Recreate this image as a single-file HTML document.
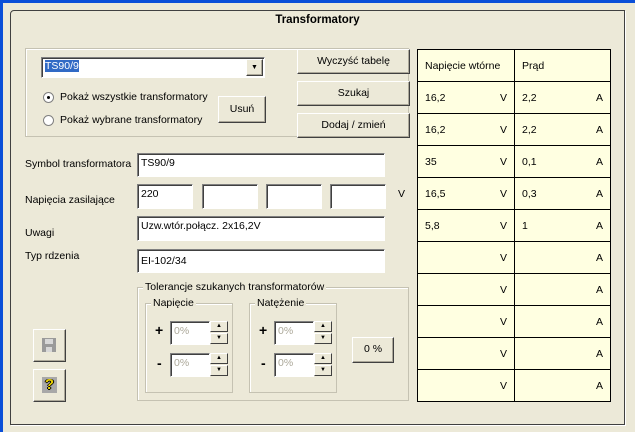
<!DOCTYPE html>
<html><head><meta charset="utf-8"><style>
*{box-sizing:border-box;margin:0;padding:0}
body{width:635px;height:432px;background:#ece9d8;position:relative;overflow:hidden;font-family:"Liberation Sans",sans-serif;font-size:10.5px;color:#000}
.a{position:absolute}
.btn{position:absolute;background:#ece9d8;border:1px solid;border-color:#fff #404040 #404040 #fff;box-shadow:inset -1px -1px 0 #aca899;text-align:center}
.edit{position:absolute;background:#fff;border:1px solid;border-color:#808080 #fff #fff #808080;box-shadow:inset 1px 1px 0 #404040;padding:3px 0 0 3px;white-space:nowrap}
.grp{position:absolute;border:1px solid #c5c2b2;box-shadow:1px 1px 0 #fff inset}
.leg{position:absolute;background:#ece9d8;padding:0 2px;top:-7px;left:5px;white-space:nowrap}
.radio{position:absolute;width:11px;height:11px;border-radius:50%;border:1px solid #808080;background:#fff}
.spin{position:absolute;width:18px;height:11px;background:#ece9d8;border:1px solid;border-color:#fff #404040 #404040 #fff;font-size:6px;text-align:center;line-height:9px}
table{position:absolute;left:417px;top:49px;border-collapse:collapse;background:#ffffe1}
td{border:1px solid #000;height:32px;padding:0 7px;vertical-align:middle}
td span{float:right}
</style></head><body>
<div class="a" style="left:0;top:0;width:635px;height:3px;background:#0a4fd8"></div>
<div class="a" style="left:0;top:0;width:3px;height:432px;background:#0a4fd8"></div>
<div class="a" style="left:10px;top:10px;width:615px;height:415px;border:1px solid #404040;border-top-left-radius:4px;box-shadow:1px 1px 0 #fff"></div>
<div class="a" style="left:0;top:14px;width:635px;text-align:center;font-weight:bold;font-size:11.5px">Transformatory</div>

<div class="grp" style="left:25px;top:48px;width:384px;height:89px"></div>
<div class="edit" style="left:41px;top:57px;width:224px;height:21px;padding-top:2px"><span style="background:#316ac5;color:#fff">TS90/9</span></div>
<div class="btn" style="left:246px;top:59px;width:17px;height:17px;font-size:7px;line-height:15px">▼</div>
<div class="radio" style="left:43px;top:92px"><div class="a" style="left:3px;top:3px;width:3px;height:3px;background:#000;border-radius:50%"></div></div>
<div class="a" style="left:60px;top:91px">Pokaż wszystkie transformatory</div>
<div class="radio" style="left:43px;top:115px"></div>
<div class="a" style="left:60px;top:114px">Pokaż wybrane transformatory</div>
<div class="btn" style="left:218px;top:96px;width:48px;height:27px;line-height:24px">Usuń</div>

<div class="btn" style="left:297px;top:49px;width:113px;height:25px;line-height:22px">Wyczyść tabelę</div>
<div class="btn" style="left:297px;top:81px;width:113px;height:25px;line-height:22px">Szukaj</div>
<div class="btn" style="left:297px;top:113px;width:113px;height:25px;line-height:22px">Dodaj / zmień</div>

<div class="a" style="left:25px;top:158px">Symbol transformatora</div>
<div class="edit" style="left:137px;top:153px;width:248px;height:24px">TS90/9</div>
<div class="a" style="left:25px;top:194px">Napięcia zasilające</div>
<div class="edit" style="left:137px;top:184px;width:56px;height:25px">220</div>
<div class="edit" style="left:202px;top:184px;width:56px;height:25px"></div>
<div class="edit" style="left:266px;top:184px;width:56px;height:25px"></div>
<div class="edit" style="left:330px;top:184px;width:56px;height:25px"></div>
<div class="a" style="left:398px;top:188px">V</div>
<div class="a" style="left:25px;top:227px">Uwagi</div>
<div class="edit" style="left:137px;top:216px;width:248px;height:25px">Uzw.wtór.połącz. 2x16,2V</div>
<div class="a" style="left:25px;top:250px">Typ rdzenia</div>
<div class="edit" style="left:137px;top:249px;width:248px;height:24px;padding-top:5px">EI-102/34</div>

<div class="grp" style="left:137px;top:287px;width:272px;height:114px"><div class="leg">Tolerancje szukanych transformatorów</div></div>
<div class="grp" style="left:145px;top:303px;width:88px;height:90px"><div class="leg">Napięcie</div></div>
<div class="grp" style="left:249px;top:303px;width:88px;height:90px"><div class="leg">Natężenie</div></div>

<div class="a" style="left:155px;top:322px;font-size:14px;font-weight:bold">+</div>
<div class="edit" style="left:170px;top:321px;width:40px;height:24px;color:#aca899">0%</div>
<div class="spin" style="left:210px;top:321px">▲</div><div class="spin" style="left:210px;top:333px">▼</div>
<div class="a" style="left:157px;top:355px;font-size:14px;font-weight:bold">-</div>
<div class="edit" style="left:170px;top:353px;width:40px;height:24px;color:#aca899">0%</div>
<div class="spin" style="left:210px;top:353px">▲</div><div class="spin" style="left:210px;top:365px">▼</div>

<div class="a" style="left:259px;top:322px;font-size:14px;font-weight:bold">+</div>
<div class="edit" style="left:274px;top:321px;width:40px;height:24px;color:#aca899">0%</div>
<div class="spin" style="left:314px;top:321px">▲</div><div class="spin" style="left:314px;top:333px">▼</div>
<div class="a" style="left:261px;top:355px;font-size:14px;font-weight:bold">-</div>
<div class="edit" style="left:274px;top:353px;width:40px;height:24px;color:#aca899">0%</div>
<div class="spin" style="left:314px;top:353px">▲</div><div class="spin" style="left:314px;top:365px">▼</div>

<div class="btn" style="left:352px;top:337px;width:42px;height:26px;line-height:23px">0 %</div>

<div class="btn" style="left:33px;top:329px;width:33px;height:33px"><div class="a" style="left:8px;top:8px;width:14px;height:14px;background:#9a9a9a"><div class="a" style="left:3px;top:1px;width:8px;height:5px;background:#d8d8d8"></div><div class="a" style="left:4px;top:9px;width:6px;height:5px;background:#d8d8d8"></div></div></div>
<div class="btn" style="left:33px;top:369px;width:33px;height:33px"><div class="a" style="left:8px;top:7px;width:15px;height:16px;background:#a8a8a8;color:#e8d000;font-weight:bold;font-size:15px;line-height:16px;text-shadow:1px 0 #000,-1px 0 #000,0 1px #000">?</div></div>

<table>
<tr><td style="width:97px">Napięcie wtórne</td><td style="width:96px">Prąd</td></tr>
<tr><td>16,2<span>V</span></td><td>2,2<span>A</span></td></tr>
<tr><td>16,2<span>V</span></td><td>2,2<span>A</span></td></tr>
<tr><td>35<span>V</span></td><td>0,1<span>A</span></td></tr>
<tr><td>16,5<span>V</span></td><td>0,3<span>A</span></td></tr>
<tr><td>5,8<span>V</span></td><td>1<span>A</span></td></tr>
<tr><td><span>V</span></td><td><span>A</span></td></tr>
<tr><td><span>V</span></td><td><span>A</span></td></tr>
<tr><td><span>V</span></td><td><span>A</span></td></tr>
<tr><td><span>V</span></td><td><span>A</span></td></tr>
<tr><td><span>V</span></td><td><span>A</span></td></tr>
</table>
</body></html>
